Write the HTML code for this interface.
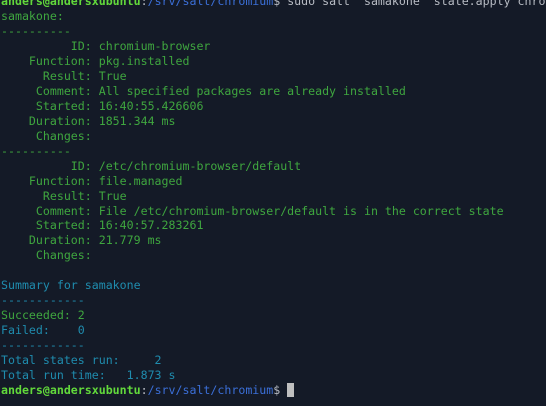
<!DOCTYPE html>
<html><head><meta charset="utf-8"><style>
html,body{margin:0;padding:0;width:546px;height:406px;overflow:hidden;background:#141a27;}
pre{margin:0;position:absolute;left:1px;top:-5.6px;font-family:"DejaVu Sans Mono","Liberation Mono",monospace;font-size:11.6px;line-height:14.93px;color:#3fa63f;white-space:pre;}
.p{color:#62d93b;font-weight:bold}
.b{color:#3b6fd8}
.w{color:#b8bcc4}
.c{color:#1f8cae}
.cur{display:inline-block;width:7px;height:14px;background:#bfbfbf;vertical-align:-3px}
</style></head><body><pre><span class="p">anders@andersxubuntu</span><span class="w">:</span><span class="b">/srv/salt/chromium</span><span class="w">$ sudo salt 'samakone' state.apply chromium</span>
samakone:
----------
          ID: chromium-browser
    Function: pkg.installed
      Result: True
     Comment: All specified packages are already installed
     Started: 16:40:55.426606
    Duration: 1851.344 ms
     Changes:
----------
          ID: /etc/chromium-browser/default
    Function: file.managed
      Result: True
     Comment: File /etc/chromium-browser/default is in the correct state
     Started: 16:40:57.283261
    Duration: 21.779 ms
     Changes:

<span class="c">Summary for samakone
------------</span>
Succeeded: 2
<span class="c">Failed:    0
------------
Total states run:     2
Total run time:   1.873 s</span>
<span class="p">anders@andersxubuntu</span><span class="w">:</span><span class="b">/srv/salt/chromium</span><span class="w">$ </span><span class="cur"></span></pre></body></html>
